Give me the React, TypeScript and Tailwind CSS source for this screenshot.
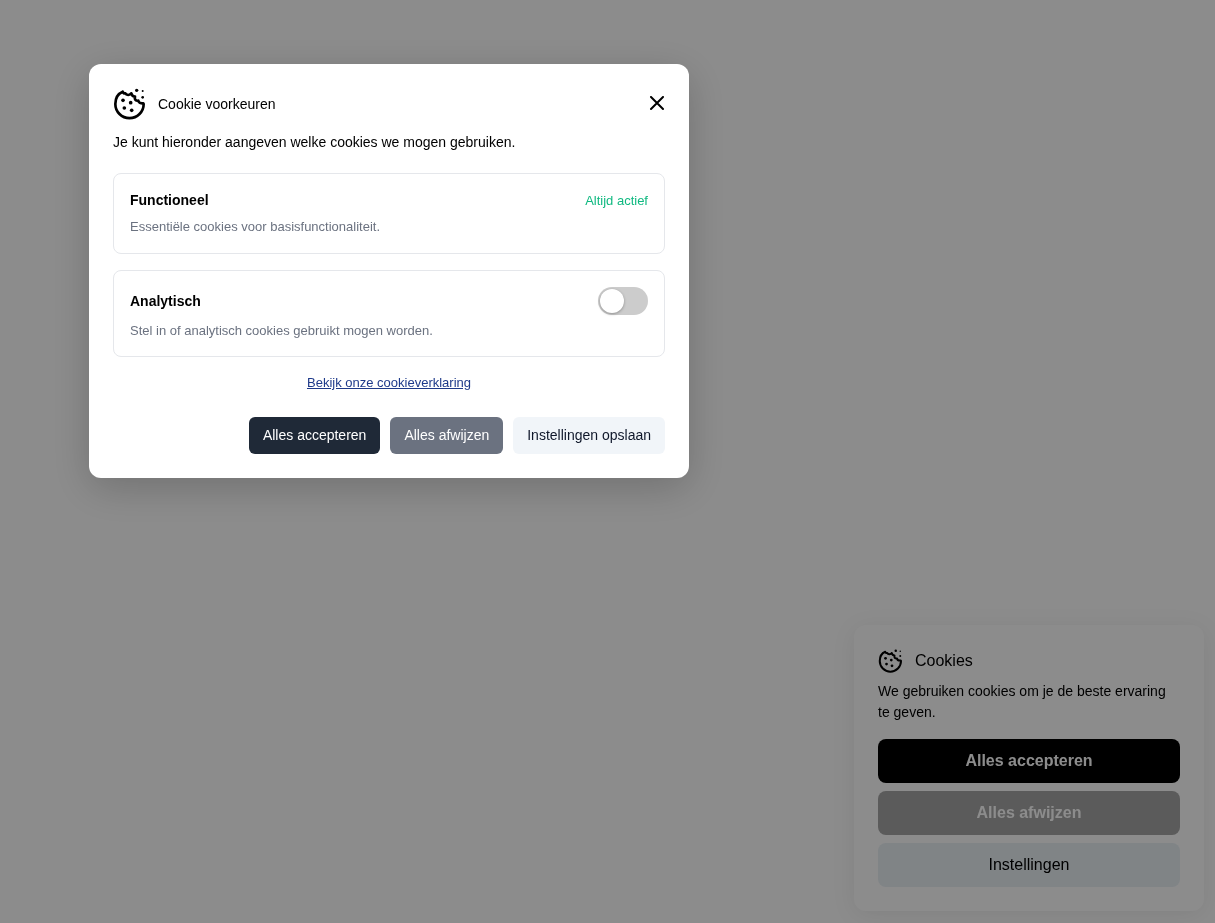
import { useState } from "react";

const CookieIcon = ({ className }: { className?: string }) => (
  <svg viewBox="0 0 96 96" fill="none" className={className} aria-hidden="true">
    <path
      d="M29 11C15 17 7 31 7 48a42.500 42.500 0 0 0 85 0l-1-2c-8 1-14-3-15-8-8 1-12-4-10-12-5 0-9-3-11-10-4 6-15 7-18 0-4 1-7-1-8-5Z"
      stroke="currentColor"
      strokeWidth="8"
      strokeLinejoin="round"
    />
    <g fill="currentColor">
      <circle cx="30" cy="37" r="5.500" />
      <circle cx="53" cy="44" r="5.500" />
      <circle cx="34" cy="60" r="5.500" />
      <circle cx="56" cy="67" r="5.500" />
      <circle cx="71" cy="7" r="5" />
      <circle cx="89" cy="9" r="3" />
      <circle cx="89" cy="28" r="4" />
    </g>
  </svg>
);

const CookieBanner = () => (
  <section
    aria-label="Cookies"
    className="fixed right-[11px] bottom-3 w-[350px] max-w-full rounded-xl bg-white p-6 shadow-[0_4px_24px_rgba(0,0,0,0.08)]"
  >
    <div className="flex items-center gap-[13px]">
      <CookieIcon className="size-6" />
      <h2 className="text-base leading-6">Cookies</h2>
    </div>
    <p className="mt-2 text-sm leading-[21px]">
      We gebruiken cookies om je de beste ervaring te geven.
    </p>
    <div className="mt-4 flex flex-col gap-2">
      <button type="button" className="h-11 rounded-lg bg-black font-bold text-white">
        Alles accepteren
      </button>
      <button type="button" className="h-11 rounded-lg bg-[#a6a6a6] font-bold text-white">
        Alles afwijzen
      </button>
      <button type="button" className="h-11 rounded-lg bg-[#e9f0f5]">
        Instellingen
      </button>
    </div>
  </section>
);

const PreferencesDialog = () => {
  const [analytics, setAnalytics] = useState(false);

  return (
    <div
      role="dialog"
      aria-modal="true"
      aria-labelledby="preferences-title"
      className="w-full max-w-[600px] rounded-xl bg-white p-6 text-sm shadow-[0_10px_40px_rgba(0,0,0,0.2)]"
    >
      <div className="flex items-center justify-between">
        <div className="flex items-center gap-[13px]">
          <CookieIcon className="size-8" />
          <h2 id="preferences-title" className="leading-[21px]">
            Cookie voorkeuren
          </h2>
        </div>
        <button type="button" aria-label="Sluiten" className="flex h-8 w-4 items-center">
          <svg
            viewBox="0 0 16 16"
            className="size-4"
            fill="none"
            stroke="currentColor"
            strokeWidth="2"
            strokeLinecap="round"
          >
            <path d="m2 1 12 12M14 1 2 13" />
          </svg>
        </button>
      </div>

      <p className="mt-3 leading-[21px]">
        Je kunt hieronder aangeven welke cookies we mogen gebruiken.
      </p>

      <div className="mt-5 flex flex-col gap-4">
        <div className="rounded-lg border border-gray-200 p-4">
          <div className="flex items-center justify-between">
            <h3 className="leading-[21px] font-bold">Functioneel</h3>
            <span className="text-[13px] leading-5 text-[#10b981]">Altijd actief</span>
          </div>
          <p className="mt-1.5 text-[13px] leading-5 text-[#6b7280]">
            Essentiële cookies voor basisfunctionaliteit.
          </p>
        </div>

        <div className="rounded-lg border border-gray-200 p-4 pb-[15px]">
          <div className="flex items-center justify-between">
            <label htmlFor="analytics" className="leading-[21px] font-bold">
              Analytisch
            </label>
            <input
              id="analytics"
              type="checkbox"
              role="switch"
              checked={analytics}
              onChange={(e) => setAnalytics(e.target.checked)}
              className="h-7 w-[50px] cursor-pointer appearance-none rounded-full bg-[#ccc] p-0.5 transition-colors before:block before:size-6 before:rounded-full before:bg-white before:shadow-[0_1px_3px_rgba(0,0,0,0.3)] before:transition-transform checked:bg-[#10b981] checked:before:translate-x-[22px]"
            />
          </div>
          <p className="mt-1.5 text-[13px] leading-5 text-[#6b7280]">
            Stel in of analytisch cookies gebruikt mogen worden.
          </p>
        </div>
      </div>

      <div className="mt-4 text-center text-[13px] leading-5">
        <a href="#cookieverklaring" className="text-[#1e3a8a] underline">
          Bekijk onze cookieverklaring
        </a>
      </div>

      <div className="mt-6 flex flex-wrap justify-end gap-2.5">
        <button type="button" className="rounded-md bg-[#1f2937] px-3.5 py-2 leading-[21px] text-white">
          Alles accepteren
        </button>
        <button type="button" className="rounded-md bg-[#6b7280] px-3.5 py-2 leading-[21px] text-white">
          Alles afwijzen
        </button>
        <button type="button" className="rounded-md bg-[#f1f5f9] px-3.5 py-2 leading-[21px] text-[#0f172a]">
          Instellingen opslaan
        </button>
      </div>
    </div>
  );
};

export default function App() {
  return (
    <main className="min-h-screen bg-white font-['Liberation_Sans',Arial,sans-serif] text-black">
      <CookieBanner />
      <div className="fixed inset-0 overflow-auto bg-black/45 pt-16 pl-[89px]">
        <PreferencesDialog />
      </div>
    </main>
  );
}
